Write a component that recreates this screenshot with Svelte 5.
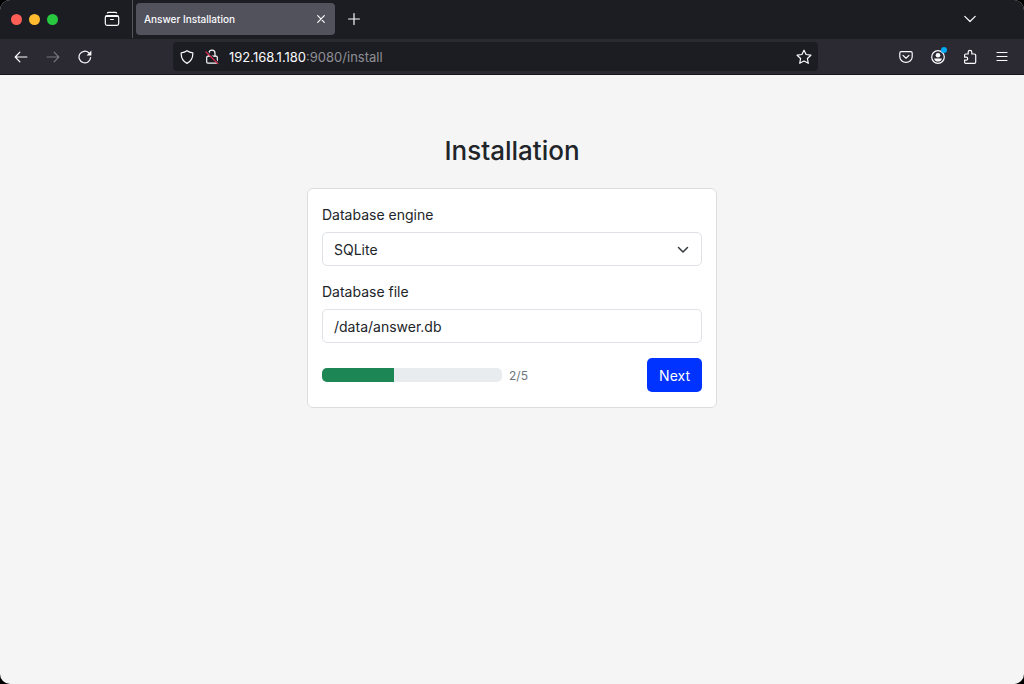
<script lang="ts">
  let url = $state('192.168.1.180:9080/install')
  let engine = $state('sqlite')
  let dbFile = $state('/data/answer.db')

  const step = 2
  const total = 5
  const engines = [
    { value: 'mysql', label: 'MariaDB/MySQL' },
    { value: 'sqlite', label: 'SQLite' },
    { value: 'postgres', label: 'PostgreSQL' },
  ]

  let port = $derived(url.indexOf(':'))
</script>

<div class="window">
  <header>
    <div class="tab-bar">
      <div class="lights">
        <span class="light red"></span>
        <span class="light yellow"></span>
        <span class="light green"></span>
      </div>
      <button class="icon recent" aria-label="Recent browsing">
        <svg width="16" height="16" viewBox="0 0 16 16">
          <path d="M3.4 2c.2-.5.6-.7 1.100-.7h7c.5 0 .9.2 1.100.7" />
          <rect x="1.300" y="4.700" width="13.400" height="9.700" rx="1.800" />
          <path d="M1.900 5.400h12.200M6.600 8.500h2.800" />
        </svg>
      </button>
      <div class="tab">
        <span>Answer Installation</span>
        <button class="icon close" aria-label="Close tab">
          <svg width="8" height="8" viewBox="0 0 8 8"><path d="M.7.7l6.600 6.600M7.300.7L.7 7.300" /></svg>
        </button>
      </div>
      <button class="icon add" aria-label="New tab">
        <svg width="12" height="12" viewBox="0 0 12 12"><path d="M6 .6v10.800M.6 6h10.800" /></svg>
      </button>
      <button class="icon list" aria-label="List all tabs">
        <svg width="12" height="8" viewBox="0 0 12 8"><path d="M.8 1.400L6 6.500l5.200-5.100" /></svg>
      </button>
    </div>

    <div class="nav-bar">
      <div class="history">
        <button class="icon" aria-label="Back">
          <svg width="14" height="14" viewBox="0 0 14 14"><path d="M12.900 7H1.200M5.900 2.200L1.200 7l4.700 4.800" /></svg>
        </button>
        <button class="icon" aria-label="Forward" disabled>
          <svg width="14" height="14" viewBox="0 0 14 14"><path d="M1.100 7h11.700M8.100 2.200L12.800 7l-4.700 4.800" /></svg>
        </button>
        <button class="icon" aria-label="Reload">
          <svg width="14" height="14" viewBox="0 0 14 14">
            <path d="M12.600 7.600A5.800 5.800 0 1 1 10.800 2.800" />
            <path class="solid" d="M13.400.6v4.800H8.600z" />
          </svg>
        </button>
      </div>

      <div class="address">
        <button class="icon" aria-label="Tracking protection">
          <svg width="14" height="14" viewBox="0 0 14 14">
            <path d="M7 .7c1.600 1.200 3.500 1.900 5.800 2.100.3 4.700-1.300 8.300-5.800 10.600C2.500 11.100.9 7.500 1.200 2.800 3.500 2.600 5.400 1.900 7 .7z" />
          </svg>
        </button>
        <button class="icon" aria-label="Connection not secure">
          <svg width="14" height="16" viewBox="0 0 14 16">
            <rect x="1.700" y="7.200" width="10.600" height="7" rx="1.200" />
            <path d="M4 7V4.200a3 3 0 0 1 6 0V7" />
            <path class="slash-gap" d="M1.800 2.200l11.600 11.400" />
            <path class="slash" d="M1 3l11.800 11.600" />
          </svg>
        </button>
        <div class="url" role="textbox" aria-label="Address" tabindex="0">
          {url.slice(0, port)}<span>{url.slice(port)}</span>
        </div>
        <button class="icon" aria-label="Bookmark this page">
          <svg width="16" height="16" viewBox="0 0 16 16">
            <path d="M8 1.200l2.100 4.300 4.800.7-3.500 3.300.9 4.800L8 12l-4.300 2.300.9-4.800L1.100 6.200l4.800-.7z" />
          </svg>
        </button>
      </div>

      <div class="tools">
        <button class="icon" aria-label="Save to Pocket">
          <svg width="14" height="14" viewBox="0 0 14 14">
            <path d="M2.200 1.700h9.600c.8 0 1.400.6 1.400 1.400v3.600a6.200 5.700 0 0 1-12.400 0V3.100c0-.8.6-1.400 1.400-1.400z" />
            <path d="M4 5.400l3 2.800 3-2.800" />
          </svg>
        </button>
        <button class="icon account" aria-label="Account">
          <svg width="14" height="14" viewBox="0 0 14 14">
            <circle cx="7" cy="7" r="6.300" />
            <circle class="solid" cx="7" cy="5.300" r="2.300" />
            <path class="solid" d="M3.200 8.500h7.600c0 2-1.700 3.100-3.800 3.100S3.200 10.500 3.200 8.500z" />
          </svg>
          <span class="badge"></span>
        </button>
        <button class="icon" aria-label="Extensions">
          <svg width="14" height="16" viewBox="0 0 14 16">
            <path d="M2.600 5h2.600V3.100a1.800 1.800 0 0 1 3.600 0V5h2.700c.7 0 1.200.5 1.200 1.200v7c0 .7-.5 1.200-1.200 1.200H2.800c-.7 0-1.200-.5-1.200-1.200v-2h1.600a1.500 1.500 0 0 0 0-3H1.600V6c0-.6.4-1 1-1z" />
          </svg>
        </button>
        <button class="icon" aria-label="Menu">
          <svg width="12" height="12" viewBox="0 0 12 12"><path d="M1 1.500h10M1 5.500h10M1 9.500h10" /></svg>
        </button>
      </div>
    </div>
  </header>

  <main>
    <h1>Installation</h1>
    <form class="card" onsubmit={(e) => e.preventDefault()}>
      <div class="field">
        <label for="engine">Database engine</label>
        <div class="select">
          <select id="engine" bind:value={engine}>
            {#each engines as { value, label }}
              <option {value}>{label}</option>
            {/each}
          </select>
          <svg width="12" height="8" viewBox="0 0 12 8"><path d="M1.500 1.500L6 6l4.500-4.500" /></svg>
        </div>
      </div>
      <div class="field">
        <label for="db-file">Database file</label>
        <input id="db-file" type="text" bind:value={dbFile} />
      </div>
      <div class="footer">
        <div class="progress" role="progressbar" aria-label="Progress" aria-valuenow={step} aria-valuemin="0" aria-valuemax={total}>
          <div class="bar" style="width: {(step / total) * 100}%"></div>
        </div>
        <span class="step">{step}/{total}</span>
        <button class="next" type="submit">Next</button>
      </div>
    </form>
  </main>
</div>

<style>
  :global(body) {
    background: #000;
  }

  .window {
    display: flex;
    flex-direction: column;
    min-height: 100vh;
    border-radius: 10px;
    overflow: hidden;
    background: #f5f5f5;
    color: #212529;
    font-family: Inter, 'Liberation Sans', sans-serif;
    font-size: 14px;
  }

  button,
  input,
  select {
    font: inherit;
    box-sizing: border-box;
  }

  svg {
    display: block;
    fill: none;
    stroke: currentColor;
    stroke-width: 1.2;
    stroke-linecap: round;
    stroke-linejoin: round;
  }

  .solid {
    fill: currentColor;
    stroke: none;
  }

  .icon {
    display: grid;
    place-items: center;
    flex-shrink: 0;
    width: 16px;
    height: 24px;
    padding: 0;
    border: none;
    background: none;
    color: #fbfbfe;
  }

  .icon:disabled {
    color: #77767d;
  }

  .tab-bar {
    display: flex;
    align-items: center;
    height: 38px;
    padding-bottom: 1px;
    background: #1c1d22;
  }

  .lights {
    display: flex;
    gap: 7px;
    padding-left: 11px;
  }

  .light {
    width: 11px;
    height: 11px;
    border-radius: 50%;
  }

  .red {
    background: #ff5f57;
  }

  .yellow {
    background: #febc2e;
  }

  .green {
    background: #28c840;
  }

  .recent {
    width: 75px;
    height: 38px;
    padding-left: 46px;
    border-right: 1px solid #55545c;
    justify-content: start;
  }

  .tab {
    display: flex;
    align-items: center;
    justify-content: space-between;
    box-sizing: border-box;
    width: 199px;
    height: 32px;
    margin-left: 3px;
    padding: 0 6px 0 8px;
    border-radius: 4px;
    background: #52525c;
    color: #fbfbfe;
    font-size: 10px;
    font-weight: 500;
  }

  .add {
    margin-left: 11px;
  }

  .list {
    margin-left: auto;
    margin-right: 46px;
  }

  .nav-bar {
    display: flex;
    align-items: center;
    height: 35px;
    border-bottom: 1px solid #16151b;
    background: #2b2a33;
  }

  .history {
    display: flex;
    gap: 16px;
    padding-left: 13px;
  }

  .address {
    display: flex;
    flex: 1;
    align-items: center;
    gap: 9px;
    height: 29px;
    margin-left: 80px;
    padding: 0 6px;
    border-radius: 4px;
    background: #1c1d22;
  }

  .url {
    flex: 1;
    color: #fbfbfe;
    font-size: 13px;
  }

  .url span {
    color: #8f8e94;
  }

  .tools {
    display: flex;
    gap: 16px;
    padding: 0 14px 0 80px;
  }

  .account {
    position: relative;
  }

  .badge {
    position: absolute;
    top: 2px;
    right: -1px;
    width: 6px;
    height: 6px;
    border-radius: 50%;
    background: #00a8f5;
  }

  .slash-gap {
    stroke: #1c1d22;
  }

  .slash {
    stroke: #e22850;
  }

  main {
    flex: 1;
    padding: 59px 16px;
  }

  h1 {
    margin: 0 0 20px;
    font-size: 26px;
    font-weight: 500;
    line-height: 34px;
    text-align: center;
  }

  .card {
    display: flex;
    flex-direction: column;
    gap: 15px;
    box-sizing: border-box;
    max-width: 410px;
    margin: 0 auto;
    padding: 15px 14px;
    border: 1px solid #dcdddf;
    border-radius: 6px;
    background: #fff;
  }

  .field {
    display: flex;
    flex-direction: column;
    gap: 6px;
  }

  label {
    line-height: 22px;
  }

  .select {
    position: relative;
  }

  .select svg {
    position: absolute;
    top: 14px;
    right: 13px;
    color: #343a40;
    stroke-width: 1.5;
    pointer-events: none;
  }

  input,
  select {
    display: block;
    width: 100%;
    height: 34px;
    padding: 0 11px;
    border: 1px solid #dee2e6;
    border-radius: 5px;
    background: #fff;
    color: #212529;
    appearance: none;
  }

  .footer {
    display: flex;
    align-items: center;
  }

  .progress {
    width: 180px;
    height: 14px;
    border-radius: 5px;
    overflow: hidden;
    background: #e9ecef;
  }

  .bar {
    height: 100%;
    background: #1c8754;
  }

  .step {
    margin-left: 7px;
    color: #6c757d;
    font-size: 12px;
  }

  .next {
    height: 34px;
    margin-left: auto;
    padding: 0 12px;
    border: none;
    border-radius: 5px;
    background: #0033ff;
    color: #fff;
  }
</style>
